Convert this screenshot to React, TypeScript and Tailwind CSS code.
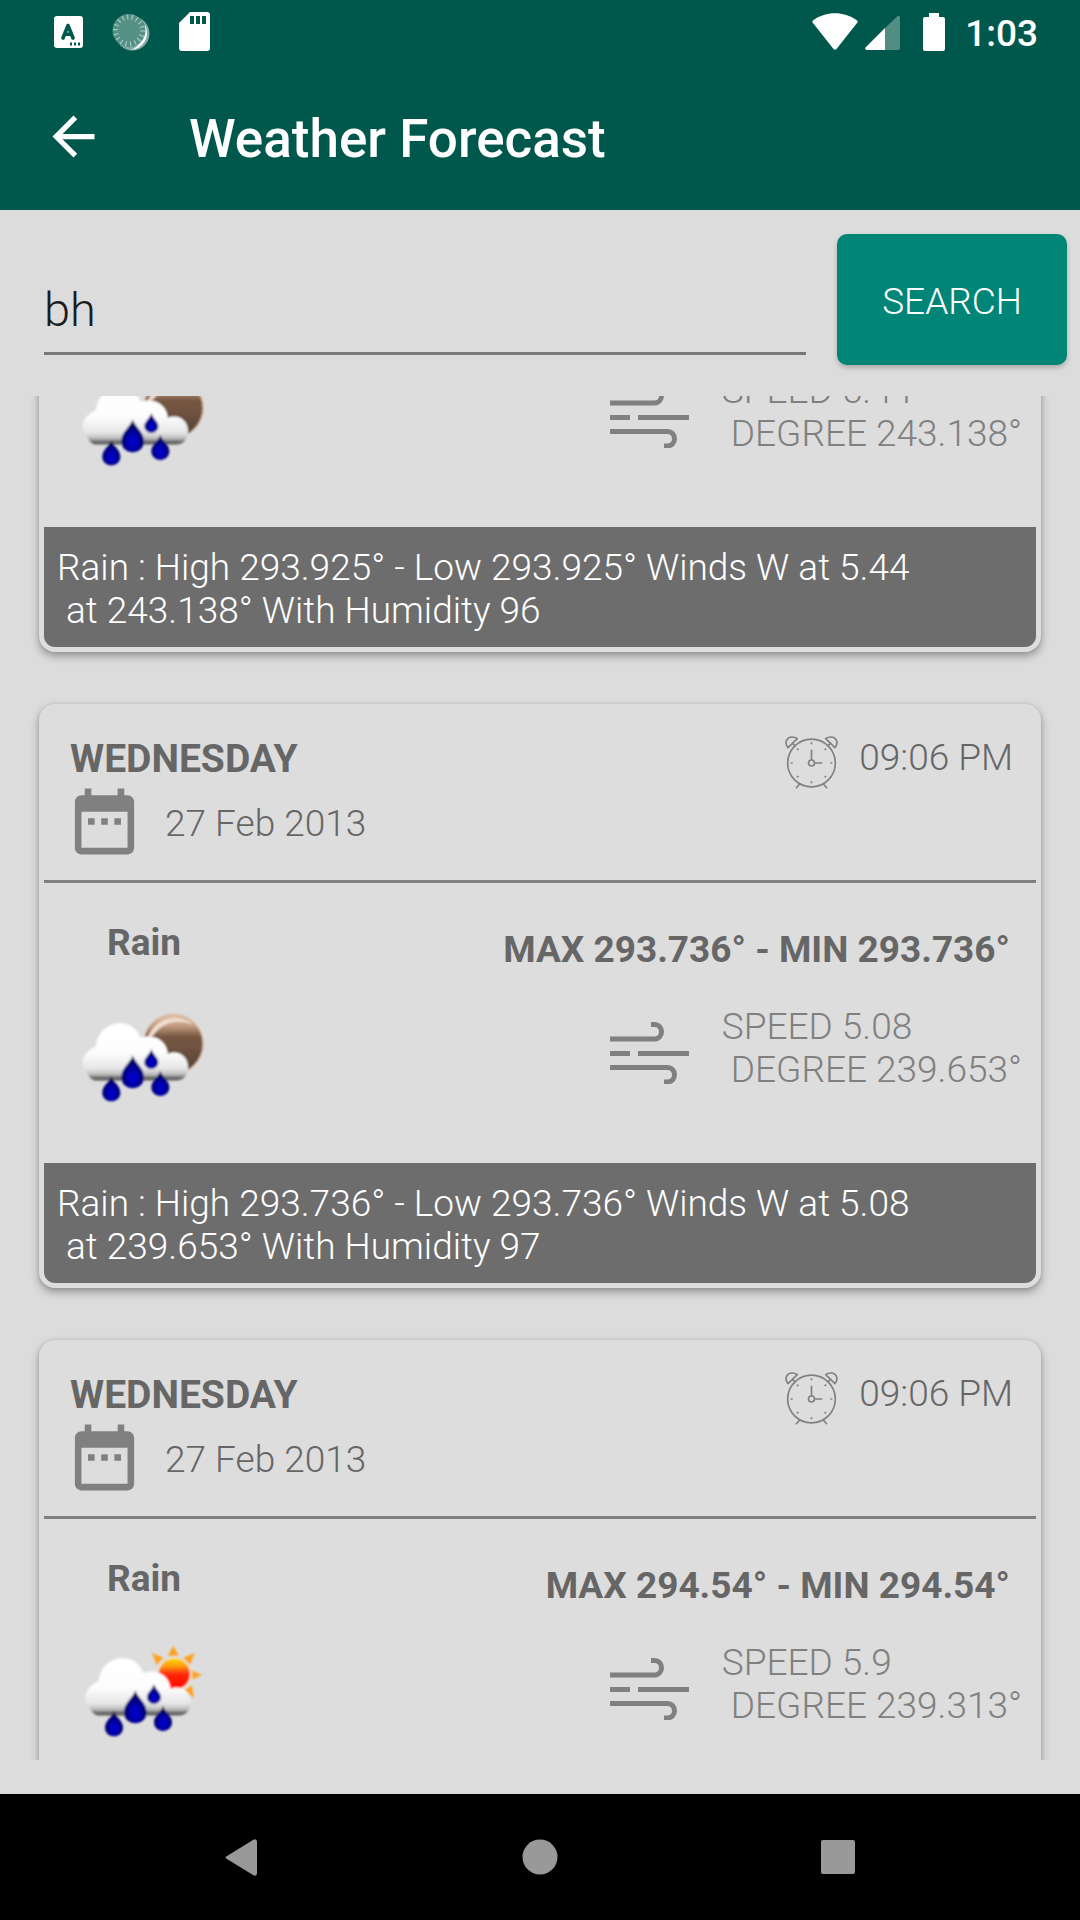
import { useLayoutEffect, useRef, useState } from "react";

type Sky = "night" | "day";

interface Forecast {
  id: number;
  day: string;
  date: string;
  time: string;
  condition: string;
  temp: string;
  speed: string;
  degree: string;
  humidity: string;
  sky: Sky;
}

const forecasts: Forecast[] = [
  {
    id: 1,
    day: "WEDNESDAY",
    date: "27 Feb 2013",
    time: "09:06 PM",
    condition: "Rain",
    temp: "293.925",
    speed: "5.44",
    degree: "243.138",
    humidity: "96",
    sky: "night",
  },
  {
    id: 2,
    day: "WEDNESDAY",
    date: "27 Feb 2013",
    time: "09:06 PM",
    condition: "Rain",
    temp: "293.736",
    speed: "5.08",
    degree: "239.653",
    humidity: "97",
    sky: "night",
  },
  {
    id: 3,
    day: "WEDNESDAY",
    date: "27 Feb 2013",
    time: "09:06 PM",
    condition: "Rain",
    temp: "294.54",
    speed: "5.9",
    degree: "239.313",
    humidity: "96",
    sky: "day",
  },
];

function StatusBar() {
  return (
    <div className="flex h-[63px] items-center justify-between pr-[42px] pl-[54px] text-white">
      <div className="flex items-center gap-[29px]">
        <svg className="h-[32px] w-[29px]" viewBox="0 0 29 32" aria-hidden="true">
          <rect width="29" height="32" rx="3" fill="white" />
          <path d="M9 22 L14 9.5 L19 22 M11 18.3 H17" fill="none" stroke="#00574b" strokeWidth="3.6" strokeLinejoin="round" strokeLinecap="round" />
          <path d="M16 28h2M20 28h2M24 28h2" stroke="#00574b" strokeWidth="3" />
        </svg>
        <svg className="h-[38px] w-[38px]" viewBox="0 0 38 38" aria-hidden="true">
          <circle cx="20.5" cy="20.5" r="17" fill="white" fillOpacity="0.5" />
          <path d="M33 12 A17 17 0 0 1 18 37 Q31 34 33 12Z" fill="white" />
          <circle cx="17" cy="17.500" r="16.5" fill="#559084" />
          <circle cx="17" cy="17.500" r="13.5" fill="none" stroke="#a5c8c0" strokeWidth="5" strokeDasharray="1.2 3.510" />
        </svg>
        <svg className="h-[39px] w-[31px]" viewBox="0 0 31 39" aria-hidden="true">
          <path d="M11 0H28a3 3 0 0 1 3 3V36a3 3 0 0 1-3 3H3a3 3 0 0 1-3-3V11Z" fill="white" />
          <path d="M11 4h4v8h-4zM17 4h4v8h-4zM23 4h4v8h-4z" fill="#00574b" />
        </svg>
      </div>
      <div className="flex items-center">
        <svg className="h-[38px] w-[46px]" viewBox="0 0 46 38" aria-hidden="true">
          <path d="M1 10 Q-0.500 8.500 1.500 7 C14 -2 32 -2 44.500 7 Q46.500 8.500 45 10 L24.500 36 Q23 37.500 21.500 36 Z" fill="white" />
        </svg>
        <svg className="ml-[7px] h-[38px] w-[35px]" viewBox="0 0 35 38" aria-hidden="true">
          <path d="M35 5V35a2 2 0 0 1-2 2H20V15L32.500 3Q35 2 35 5Z" fill="white" fillOpacity="0.32" />
          <path d="M20 15V37H1.500Q-1 36 1 34Z" fill="white" />
        </svg>
        <svg className="ml-[23px] h-[38px] w-[22px]" viewBox="0 0 22 38" aria-hidden="true">
          <path d="M6 0H16V4H20a2 2 0 0 1 2 2V36a2 2 0 0 1-2 2H2a2 2 0 0 1-2-2V6a2 2 0 0 1 2-2H6Z" fill="white" />
        </svg>
        <span className="ml-[20px] pt-[3px] text-[37px] leading-[43px] font-medium">1:03</span>
      </div>
    </div>
  );
}

function AppBar() {
  return (
    <div className="flex h-[147px] items-center pb-[1px] pl-[42px] text-white">
      <button type="button" aria-label="Back" className="shrink-0">
        <svg className="h-[63px] w-[63px]" viewBox="0 0 24 24" fill="currentColor" aria-hidden="true">
          <path d="M20 11H7.830l5.590-5.590L12 4l-8 8 8 8 1.410-1.410L7.830 13H20v-2z" />
        </svg>
      </button>
      <h1 className="ml-[84px] pt-[6px] text-[53px] leading-[62px] font-medium">Weather Forecast</h1>
    </div>
  );
}

function SearchBar() {
  const [query, setQuery] = useState("bh");
  return (
    <form
      className="flex items-end gap-[31px] pt-[24px] pr-[13px] pb-[31px] pl-[44px]"
      onSubmit={(event) => event.preventDefault()}
    >
      <input
        type="text"
        aria-label="City"
        value={query}
        onChange={(event) => setQuery(event.target.value)}
        className="mb-[10px] min-w-0 flex-1 border-b-[3px] border-[#777a78] bg-transparent pb-[14px] text-[47px] leading-[56px] font-light text-[#1c1c1c] outline-none"
      />
      <button
        type="submit"
        className="h-[131px] rounded-[10px] bg-[#008577] px-[45px] pt-[3px] text-[37px] leading-[43px] font-light text-white shadow-[0_3px_5px_rgba(0,0,0,0.22)]"
      >
        SEARCH
      </button>
    </form>
  );
}

function CalendarIcon() {
  return (
    <svg className="h-[79px] w-[79px]" viewBox="0 0 24 24" fill="#808080" aria-hidden="true">
      <path d="M9 11H7v2h2v-2zm4 0h-2v2h2v-2zm4 0h-2v2h2v-2zm2-7h-1V2h-2v2H8V2H6v2H5c-1.110 0-1.990.9-1.990 2L3 20c0 1.100.890 2 2 2h14c1.100 0 2-.9 2-2V6c0-1.100-.9-2-2-2zm0 16H5V9h14v11z" />
    </svg>
  );
}

function AlarmIcon() {
  return (
    <svg className="h-[54px] w-[54px]" viewBox="75 46 162 162" fill="none" stroke="#808080" strokeWidth="5" aria-hidden="true">
      <circle cx="154.500" cy="127" r="71.500" />
      <circle cx="154.500" cy="127" r="9" />
      <path d="M154.500 118V87M164 127H187" />
      <path d="M84 81C70 62 84 48 98 49Q108 50 112 54Z" strokeLinejoin="round" />
      <path d="M225 81C239 62 225 48 211 49Q201 50 197 54Z" strokeLinejoin="round" />
      <path d="M97 67L106 77M212 67L203 77" />
      <path d="M119 190L108 203M190 190L201 203" />
      <path d="M154.500 65V71M154.500 182V188M92 127H98M211 127H217M111 84L115 88M194 88L198 84M111 170L115 166M194 166L198 170" />
    </svg>
  );
}

function WindIcon() {
  return (
    <svg className="mt-[17px] h-[62px] w-[79px] shrink-0" viewBox="0 0 79 62" fill="none" stroke="#808080" strokeWidth="5" aria-hidden="true">
      <path d="M0 17H44C54 17 54 2.500 44 2.500H41" />
      <path d="M0 31.500H20M28 31.500H79" />
      <path d="M0 45.500H57C67 45.500 67 60 57 60H54" />
    </svg>
  );
}

function RainIcon({ sky, id }: { sky: Sky; id: number }) {
  const blur = `soft-${id}`;
  const cloud = `cloud-${id}`;
  const moon = `moon-${id}`;
  const sun = `sun-${id}`;
  const drop = `drop-${id}`;
  return (
    <svg
      className="h-[100px] w-[127px]"
      viewBox={sky === "night" ? "60 45 381 300" : "52 48 381 300"}
      role="img"
      aria-label={`Rain, ${sky}`}
    >
      <defs>
        <filter id={blur} x="-5%" y="-5%" width="110%" height="110%">
          <feGaussianBlur stdDeviation="2.5" />
        </filter>
        <linearGradient id={cloud} gradientUnits="userSpaceOnUse" x1="0" y1="100" x2="0" y2="274">
          <stop offset="0" stopColor="#ffffff" />
          <stop offset="0.500" stopColor="#fdfdfd" />
          <stop offset="0.780" stopColor="#e6e6e6" />
          <stop offset="0.880" stopColor="#bdbdbd" />
          <stop offset="0.950" stopColor="#5a5a5a" />
          <stop offset="1" stopColor="#8a8a8a" />
        </linearGradient>
        <linearGradient id={moon} x1="0" y1="0" x2="0" y2="1">
          <stop offset="0" stopColor="#e3c3aa" />
          <stop offset="0.200" stopColor="#c09a80" />
          <stop offset="0.380" stopColor="#74563f" />
          <stop offset="0.600" stopColor="#6e5140" />
          <stop offset="1" stopColor="#4f4133" />
        </linearGradient>
        <linearGradient id={sun} x1="0" y1="0" x2="0" y2="1">
          <stop offset="0" stopColor="#ffd800" />
          <stop offset="0.250" stopColor="#ff9c10" />
          <stop offset="0.500" stopColor="#ff2a08" />
          <stop offset="1" stopColor="#ff0000" />
        </linearGradient>
        <radialGradient id={drop} cx="0.500" cy="0.680" r="0.560">
          <stop offset="0" stopColor="#0000d8" />
          <stop offset="0.450" stopColor="#0000a8" />
          <stop offset="1" stopColor="#000050" />
        </radialGradient>
      </defs>
      <g filter={`url(#${blur})`}>
        {sky === "night" ? (
          <g>
            <circle cx="340" cy="162" r="89" fill={`url(#${moon})`} stroke="#d9b294" strokeWidth="3" />
            <path d="M262 146C275 105 310 82 350 84C374 87 390 94 400 104C360 88 310 92 280 136Z" fill="#f0ddcf" />
          </g>
        ) : (
          <g transform="translate(-8 6)">
            <path
              d="M340 56L324 86H356ZM404 78L370 92L390 114ZM276 78L310 92L290 114ZM426 144L392 129V159ZM402 213L372 190L395 175Z"
              fill="#ffa01e"
            />
            <circle cx="343" cy="144" r="53" fill="#f1e3cd" />
            <circle cx="343" cy="141" r="47" fill={`url(#${sun})`} />
          </g>
        )}
        <path
          d="M104 272C84 264 84 250 76 238C58 216 70 186 108 168C112 124 146 100 180 100C212 100 232 118 242 144C274 132 318 144 324 192C352 178 384 198 384 230C384 252 374 270 350 272Z"
          fill={`url(#${cloud})`}
        />
        <g fill={`url(#${drop})`}>
          <path d="M218 196C223 218 252 232 252 262C252 282 236 295 218 295C200 295 184 282 184 262C184 232 213 218 218 196Z" />
          <path d="M274 177C277 192 295 202 295 217C295 229 285 237 274 237C263 237 253 229 253 217C253 202 271 192 274 177Z" />
          <path d="M301 242C305 260 328 270 328 292C328 308 316 318 301 318C286 318 274 308 274 292C274 270 297 260 301 242Z" />
          <path d="M154 258C158 276 181 286 181 308C181 324 169 334 154 334C139 334 127 324 127 308C127 286 150 276 154 258Z" />
        </g>
      </g>
    </svg>
  );
}

function ForecastCard({ item }: { item: Forecast }) {
  return (
    <li className="rounded-[16px] bg-[#dddddd] p-[5px] text-[37px] leading-[43px] font-light shadow-[0_4px_9px_rgba(0,0,0,0.34),0_0_3px_rgba(0,0,0,0.1)]">
      <div className="flex items-start justify-between border-b-[3px] border-[#808080] pt-[27px] pr-[23px] pb-[19px] pl-[21px] text-[#666666]">
        <div>
          <h2 className="pl-[5px] text-[39px] leading-[46px] font-bold">{item.day}</h2>
          <div className="flex items-center gap-[21px]">
            <CalendarIcon />
            <span className="pt-[4px]">{item.date}</span>
          </div>
        </div>
        <div className="flex items-start gap-[20px]">
          <AlarmIcon />
          <span>{item.time}</span>
        </div>
      </div>
      <div className="flex items-start justify-between">
        <div className="flex flex-col gap-[41px] pt-[38px] pb-[58px] pl-[36px]">
          <h3 className="pl-[27px] font-bold text-[#666666]">{item.condition}</h3>
          <RainIcon sky={item.sky} id={item.id} />
        </div>
        <div className="flex flex-col items-end gap-[34px] pt-[45px] pr-[14px]">
          <p className="pr-[12px] font-bold text-[#666666]">
            MAX {item.temp}° - MIN {item.temp}°
          </p>
          <div className="flex items-start gap-[33px] text-[#808080]">
            <WindIcon />
            <p className="whitespace-pre">{`SPEED ${item.speed}\n DEGREE ${item.degree}°`}</p>
          </div>
        </div>
      </div>
      <p className="rounded-b-[11px] bg-[#6d6d6d] px-[13px] pt-[19px] pb-[15px] whitespace-pre-wrap text-white">
        {`${item.condition} : High ${item.temp}° - Low ${item.temp}° Winds W at ${item.speed}\n at ${item.degree}° With Humidity ${item.humidity}`}
      </p>
    </li>
  );
}

function NavigationBar() {
  return (
    <nav className="flex h-[126px] shrink-0 items-center justify-center gap-[235px] bg-black">
      <button type="button" aria-label="Back">
        <svg className="h-[63px] w-[63px]" viewBox="0 0 63 63" fill="#999999" aria-hidden="true">
          <path d="M16 30L42 14Q46 12 46 16V47Q46 51 42 49L16 33Q13 31.500 16 30Z" />
        </svg>
      </button>
      <button type="button" aria-label="Home">
        <svg className="h-[63px] w-[63px]" viewBox="0 0 63 63" fill="#999999" aria-hidden="true">
          <circle cx="31" cy="31" r="17.500" />
        </svg>
      </button>
      <button type="button" aria-label="Recent apps">
        <svg className="h-[63px] w-[63px]" viewBox="0 0 63 63" fill="#999999" aria-hidden="true">
          <rect x="14" y="14" width="34" height="34" rx="2" />
        </svg>
      </button>
    </nav>
  );
}

export default function App() {
  const list = useRef<HTMLUListElement>(null);

  // Opens the list scrolled part-way into the first card.
  useLayoutEffect(() => {
    if (list.current) list.current.scrollTop = 380;
  }, []);

  return (
    <div className="flex h-screen flex-col bg-[#dcdcdc] font-['Roboto',sans-serif]">
      <header className="shrink-0 bg-[#00574b]">
        <StatusBar />
        <AppBar />
      </header>
      <main className="flex min-h-0 flex-1 flex-col pb-[34px]">
        <SearchBar />
        <ul
          ref={list}
          className="flex min-h-0 flex-1 flex-col gap-[52px] overflow-y-auto px-[39px] py-[52px] [scrollbar-width:none]"
        >
          {forecasts.map((item) => (
            <ForecastCard key={item.id} item={item} />
          ))}
        </ul>
      </main>
      <NavigationBar />
    </div>
  );
}
